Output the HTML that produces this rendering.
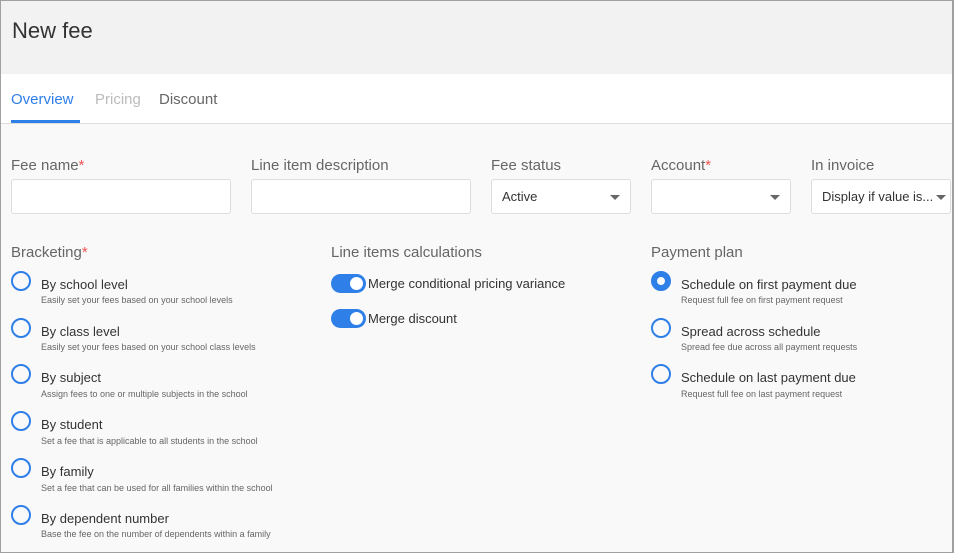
<!DOCTYPE html>
<html><head><style>
*{box-sizing:border-box;margin:0;padding:0}
body{width:954px;height:553px;font-family:"Liberation Sans",sans-serif;background:#f9f9f9;overflow:hidden;position:relative}
.frame{position:absolute;left:0;top:0;width:954px;height:553px;border:1px solid #a0a0a0;border-right-width:2px}
.hdr{position:absolute;left:1px;top:1px;width:951px;height:73px;background:#f2f2f2}
.hdr h1{position:absolute;left:11px;top:17px;font-size:22px;font-weight:normal;color:#333}
.tabs{position:absolute;left:1px;top:74px;width:951px;height:50px;background:#fff;border-bottom:1px solid #ddd}
.tab{position:absolute;top:17px;font-size:15px}
.a{position:absolute;font-size:15px;color:#666}
.a b{color:#e55;font-weight:normal}
.in{position:absolute;top:179px;height:35px;background:#fff;border:1px solid #ddd;border-radius:3px;font-size:13px;color:#333;padding:9px 10px}
.car{position:absolute;right:10px;top:15px;width:0;height:0;border-left:5px solid transparent;border-right:5px solid transparent;border-top:5px solid #666}
.r{position:absolute;width:20px;height:20px;border:2px solid #2f7fe8;border-radius:50%}
.r.on{border-width:6px}
.l{position:absolute;font-size:13px;color:#333}
.s{position:absolute;font-size:9px;color:#666}
.tg{position:absolute;left:331px;width:35px;height:19px;background:#2f7fe8;border-radius:10px}
.tg:after{content:"";position:absolute;right:3px;top:3px;width:13px;height:13px;border-radius:50%;background:#fff}
</style></head><body>
<div class="hdr"><h1>New fee</h1></div>
<div class="tabs">
<span class="tab" style="left:10px;color:#2f7fe8">Overview</span>
<span class="tab" style="left:94px;color:#bbb">Pricing</span>
<span class="tab" style="left:158px;color:#666">Discount</span>
<div style="position:absolute;left:10px;top:46px;width:69px;height:3px;background:#2f7fe8"></div>
</div>
<div class="a" style="left:11px;top:157px">Fee name<b>*</b></div>
<div class="a" style="left:251px;top:157px">Line item description</div>
<div class="a" style="left:491px;top:157px">Fee status</div>
<div class="a" style="left:651px;top:157px">Account<b>*</b></div>
<div class="a" style="left:811px;top:157px">In invoice</div>
<div class="in" style="left:11px;width:220px"></div>
<div class="in" style="left:251px;width:220px"></div>
<div class="in" style="left:491px;width:140px">Active<span class="car"></span></div>
<div class="in" style="left:651px;width:140px"><span class="car"></span></div>
<div class="in" style="left:811px;width:140px;padding-left:10px">Display if value is...<span class="car" style="right:4px"></span></div>

<div class="a" style="left:11px;top:244px">Bracketing<b>*</b></div>
<div class="a" style="left:331px;top:244px">Line items calculations</div>
<div class="a" style="left:651px;top:244px">Payment plan</div>

<div class="r" style="left:11px;top:271px"></div><div class="l" style="left:41px;top:277px">By school level</div><div class="s" style="left:41px;top:295px">Easily set your fees based on your school levels</div>
<div class="r" style="left:11px;top:318px"></div><div class="l" style="left:41px;top:324px">By class level</div><div class="s" style="left:41px;top:342px">Easily set your fees based on your school class levels</div>
<div class="r" style="left:11px;top:364px"></div><div class="l" style="left:41px;top:370px">By subject</div><div class="s" style="left:41px;top:389px">Assign fees to one or multiple subjects in the school</div>
<div class="r" style="left:11px;top:411px"></div><div class="l" style="left:41px;top:417px">By student</div><div class="s" style="left:41px;top:436px">Set a fee that is applicable to all students in the school</div>
<div class="r" style="left:11px;top:458px"></div><div class="l" style="left:41px;top:464px">By family</div><div class="s" style="left:41px;top:483px">Set a fee that can be used for all families within the school</div>
<div class="r" style="left:11px;top:505px"></div><div class="l" style="left:41px;top:511px">By dependent number</div><div class="s" style="left:41px;top:529px">Base the fee on the number of dependents within a family</div>

<div class="tg" style="top:274px"></div><div class="l" style="left:368px;top:276px">Merge conditional pricing variance</div>
<div class="tg" style="top:309px"></div><div class="l" style="left:368px;top:311px">Merge discount</div>

<div class="r on" style="left:651px;top:271px"></div><div class="l" style="left:681px;top:277px">Schedule on first payment due</div><div class="s" style="left:681px;top:295px">Request full fee on first payment request</div>
<div class="r" style="left:651px;top:318px"></div><div class="l" style="left:681px;top:324px">Spread across schedule</div><div class="s" style="left:681px;top:342px">Spread fee due across all payment requests</div>
<div class="r" style="left:651px;top:364px"></div><div class="l" style="left:681px;top:370px">Schedule on last payment due</div><div class="s" style="left:681px;top:389px">Request full fee on last payment request</div>
<div class="frame"></div>
</body></html>
